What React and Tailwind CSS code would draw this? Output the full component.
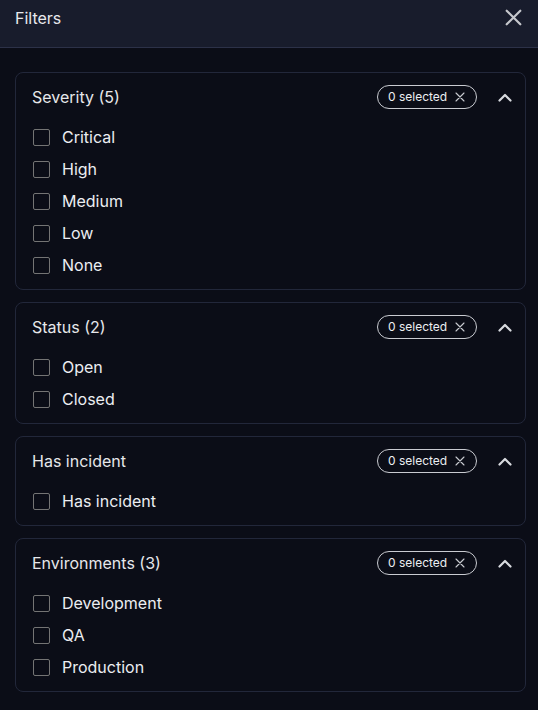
const groups = [
    { title: 'Severity (5)', items: ['Critical', 'High', 'Medium', 'Low', 'None'] },
    { title: 'Status (2)', items: ['Open', 'Closed'] },
    { title: 'Has incident', items: ['Has incident'] },
    { title: 'Environments (3)', items: ['Development', 'QA', 'Production'] },
]

function Cross({ size, stroke, className }) {
    return (
        <svg width={size} height={size} viewBox="0 0 10 10" className={className}>
            <path d="M1 1 9 9M9 1 1 9" stroke="currentColor" strokeWidth={stroke} strokeLinecap="round" fill="none" />
        </svg>
    )
}

function Group({ title, items }) {
    return (
        <div className="rounded-lg border border-[#22273a] pb-2">
            <div className="h-12 flex items-center pl-4 pr-[13px]">
                <span className="flex-1 text-[16px] text-[#e6e7ea]">{title}</span>
                <span className="h-6 w-[100px] flex items-center pl-[10px] gap-[8px] rounded-full border border-[#c9cbd1] text-[12px] text-[#eceef2]">
                    0 selected
                    <Cross size={10} stroke={1.1} className="text-[#c9cbd1]" />
                </span>
                <svg width="14" height="9" viewBox="0 0 14 9" className="ml-[21px] text-[#d8dadf]">
                    <path d="M1.5 7.5 7 2l5.5 5.5" stroke="currentColor" strokeWidth="2.2" strokeLinecap="round" strokeLinejoin="round" fill="none" />
                </svg>
            </div>
            {items.map((item) => (
                <div key={item} className="h-8 flex items-center pl-[17px]">
                    <span className="w-[17px] h-[17px] rounded-[2px] border-[1.5px] border-[#747474]"></span>
                    <span className="ml-3 text-[16px] text-[#eceef2]">{item}</span>
                </div>
            ))}
        </div>
    )
}

export default function App() {
    return (
        <div className="w-[538px] h-[710px] bg-[#0b0d17] overflow-hidden" style={{ fontFamily: 'Inter, "Liberation Sans", sans-serif' }}>
            <div className="h-12 bg-[#181c2c] border-b border-[#2c3148] flex items-start justify-between pl-[15px] pr-[16px] pt-[6px]">
                <span className="text-[16px] text-[#e8e9ec]">Filters</span>
                <Cross size={17} stroke={1.3} className="text-[#c5c7cc] mt-[3px]" />
            </div>
            <div className="pt-6 pl-[15px] pr-[12px] flex flex-col gap-3">
                {groups.map((g) => (
                    <Group key={g.title} {...g} />
                ))}
            </div>
        </div>
    )
}
